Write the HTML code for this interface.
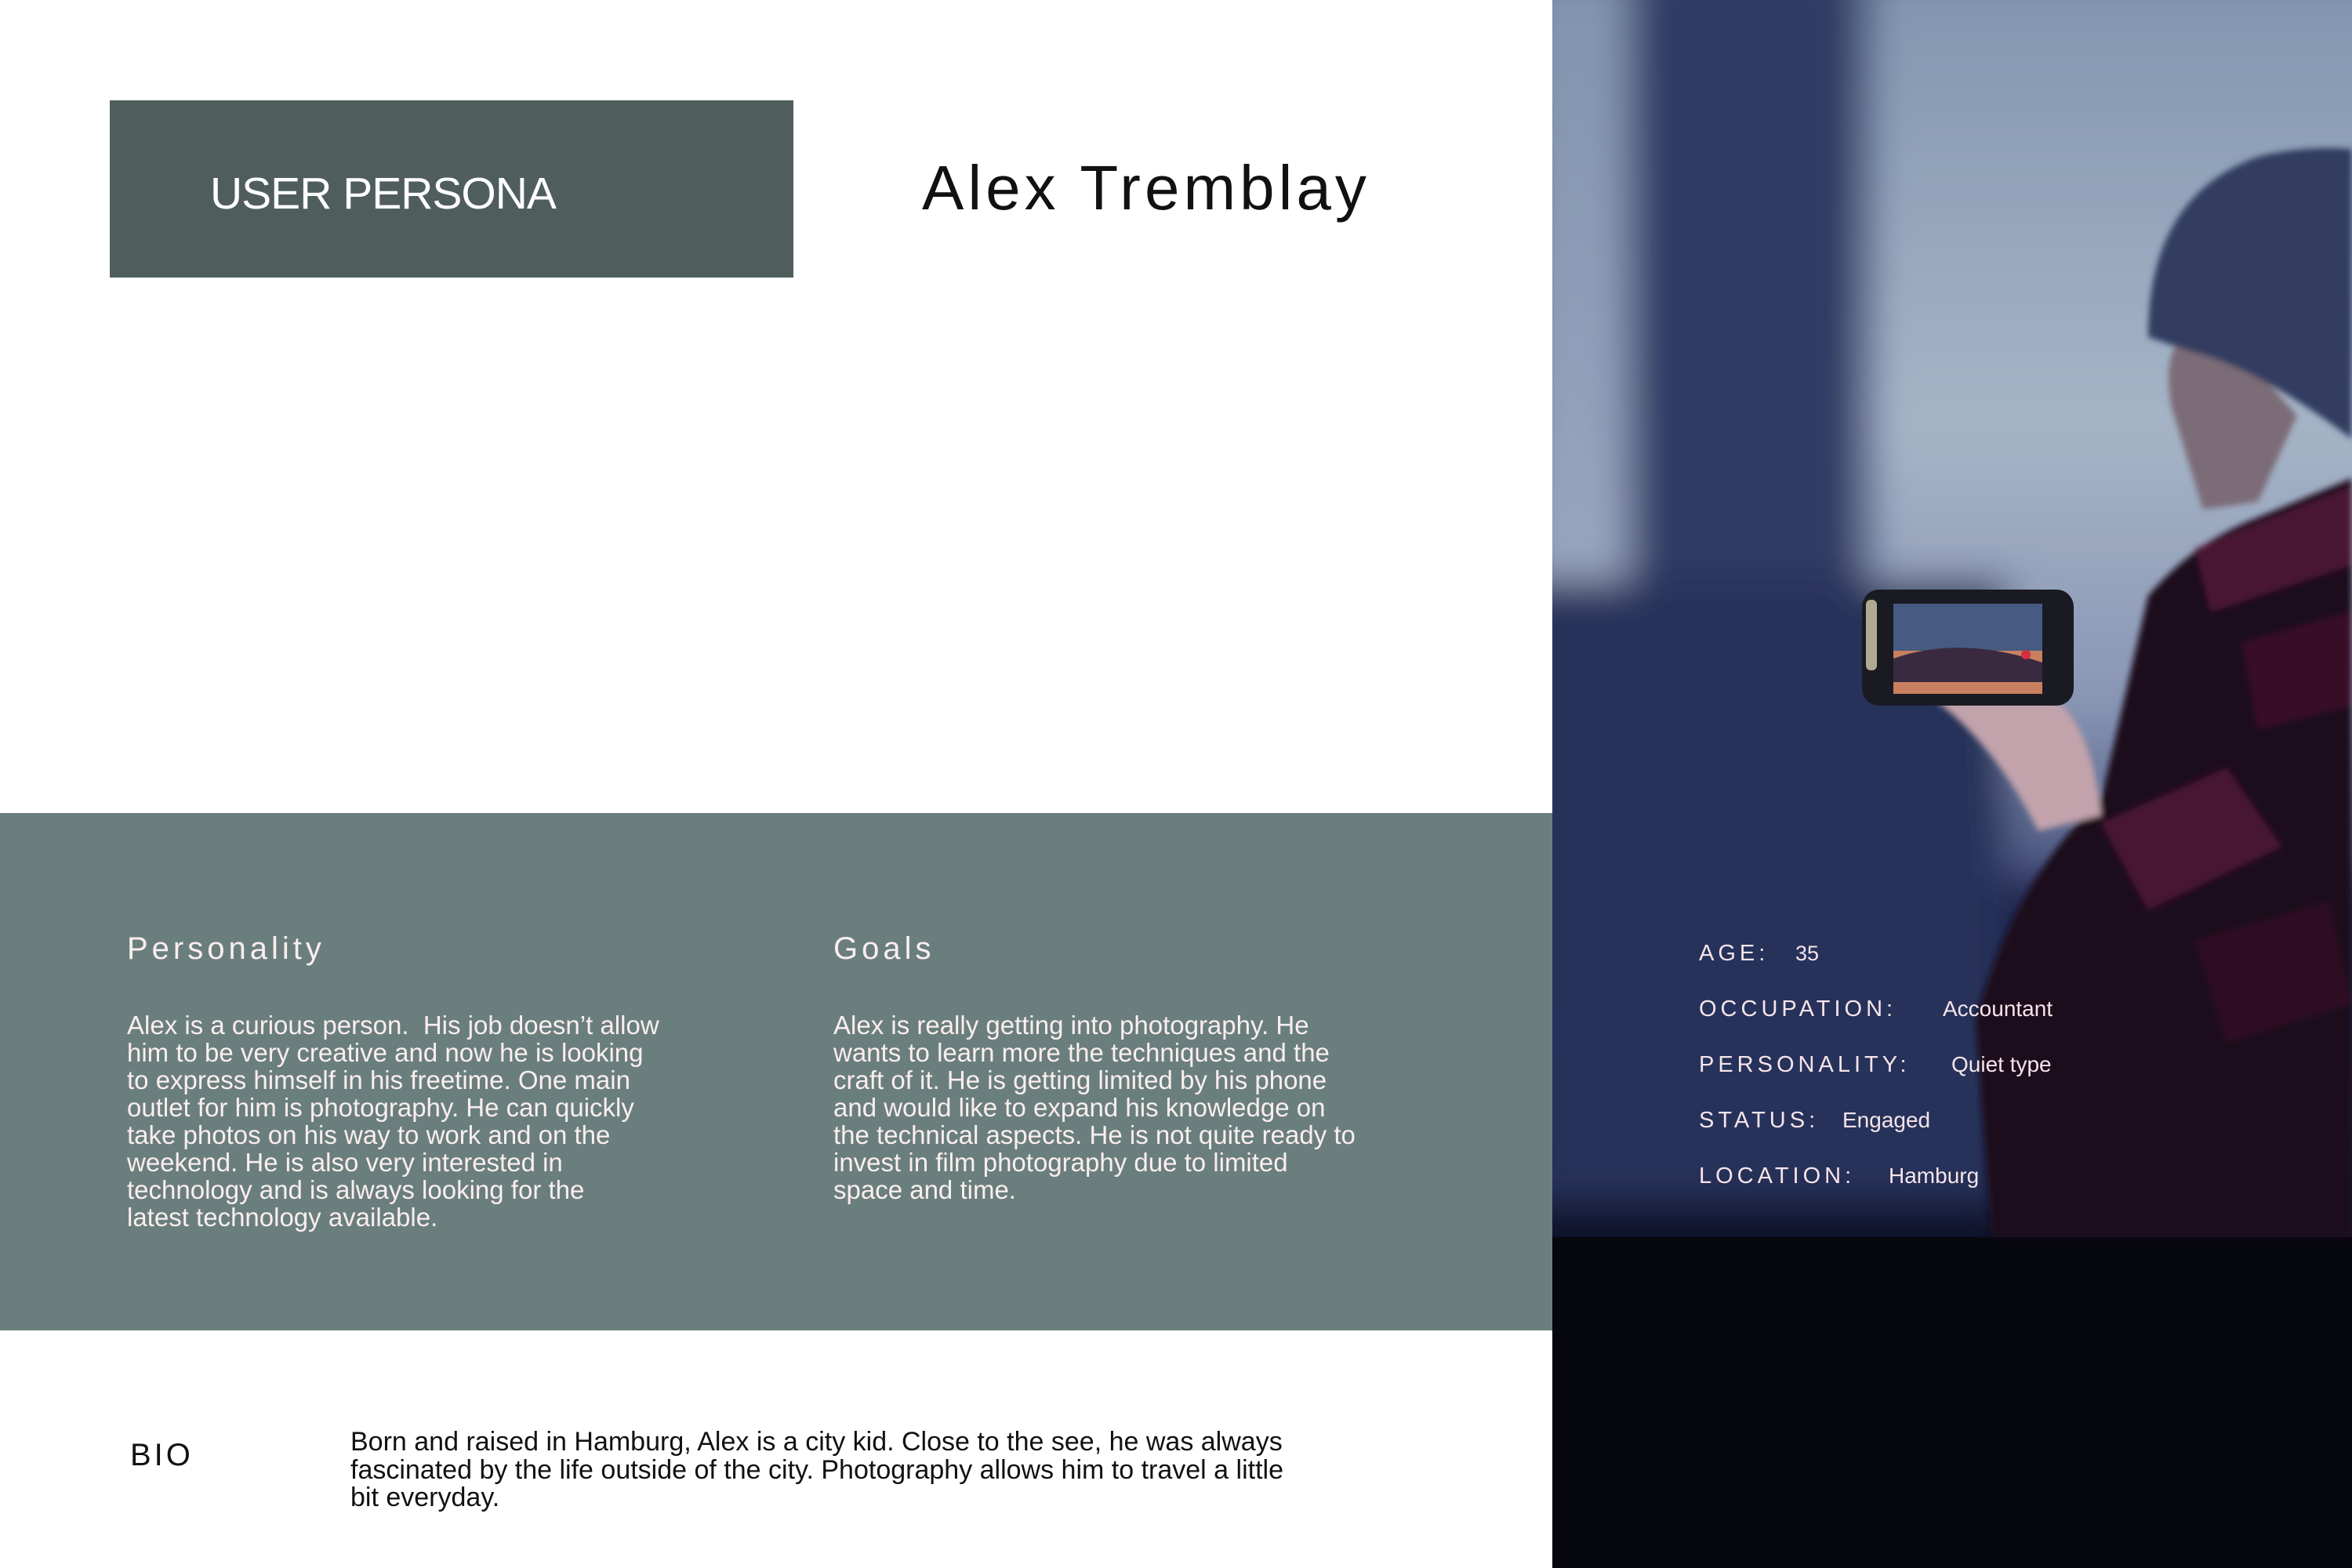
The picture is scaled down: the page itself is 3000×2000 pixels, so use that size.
<!DOCTYPE html>
<html><head><meta charset="utf-8"><style>
*{margin:0;padding:0;box-sizing:border-box}
body{width:3000px;height:2000px;position:relative;background:#fff;font-family:"Liberation Sans",sans-serif;overflow:hidden}
.abs{position:absolute;white-space:nowrap}
.band{position:absolute;left:0;top:1037px;width:1980px;height:660px;background:#6a7f7d}
.box{position:absolute;left:140px;top:128px;width:872px;height:226px;background:#4f5e5d}
.h{color:#fbeeee;font-size:40px;letter-spacing:5px}
.p{color:#fbeeee;font-size:33px;letter-spacing:0px;line-height:35px}
</style></head><body>
<div class="box"></div>
<div class="abs" style="left:268px;top:214px;font-size:57px;color:#fff;letter-spacing:-1px">USER PERSONA</div>
<div class="abs" style="left:1176px;top:194px;font-size:80px;color:#111;letter-spacing:5px">Alex Tremblay</div>
<div class="band"></div>
<div class="abs h" style="left:162px;top:1188px">Personality</div>
<div class="abs h" style="left:1063px;top:1188px">Goals</div>
<div class="abs p" style="left:162px;top:1290px">Alex is a curious person.&nbsp; His job doesn’t allow<br>him to be very creative and now he is looking<br>to express himself in his freetime. One main<br>outlet for him is photography. He can quickly<br>take photos on his way to work and on the<br>weekend. He is also very interested in<br>technology and is always looking for the<br>latest technology available.</div>
<div class="abs p" style="left:1063px;top:1290px">Alex is really getting into photography. He<br>wants to learn more the techniques and the<br>craft of it. He is getting limited by his phone<br>and would like to expand his knowledge on<br>the technical aspects. He is not quite ready to<br>invest in film photography due to limited<br>space and time.</div>
<div class="abs" style="left:166px;top:1834px;font-size:40px;letter-spacing:4px;color:#111">BIO</div>
<div class="abs" style="left:447px;top:1822px;font-size:34px;letter-spacing:0px;line-height:35.5px;color:#111">Born and raised in Hamburg, Alex is a city kid. Close to the see, he was always<br>fascinated by the life outside of the city. Photography allows him to travel a little<br>bit everyday.</div>

<svg style="position:absolute;left:1980px;top:0" width="1020" height="2000" viewBox="0 0 1020 2000">
<defs>
<linearGradient id="bg" x1="0" y1="0" x2="0" y2="1">
<stop offset="0" stop-color="#33416a"/><stop offset="0.4" stop-color="#2a3664"/><stop offset="0.6" stop-color="#1c2248"/><stop offset="0.79" stop-color="#0f1026"/><stop offset="1" stop-color="#07070f"/>
</linearGradient>
<linearGradient id="sky" x1="0" y1="0" x2="0" y2="1">
<stop offset="0" stop-color="#8094ae"/><stop offset="0.5" stop-color="#a6b4c7"/><stop offset="0.8" stop-color="#8a97b5"/><stop offset="1" stop-color="#4a5580"/>
</linearGradient>
<linearGradient id="skyL" x1="0" y1="0" x2="0" y2="1">
<stop offset="0" stop-color="#8193ae"/><stop offset="1" stop-color="#9aa7c0"/>
</linearGradient>
<filter id="b"><feGaussianBlur stdDeviation="25"/></filter>
<filter id="b2"><feGaussianBlur stdDeviation="4"/></filter>
</defs>
<rect width="1020" height="2000" fill="url(#bg)"/>
<g filter="url(#b)">
<rect x="-40" y="-40" width="140" height="820" fill="url(#skyL)"/>
<rect x="400" y="-40" width="700" height="1160" fill="url(#sky)"/>
<rect x="110" y="-40" width="270" height="800" fill="#2e3a64"/>
<rect x="-40" y="740" width="620" height="800" fill="#26305a"/>
</g>
<rect x="0" y="1578" width="1020" height="422" fill="#07070f"/>
<g filter="url(#b2)">
<path d="M560 1578 L540 1300 Q590 1120 700 1020 L760 760 Q820 690 900 660 L1020 610 L1020 1578 Z" fill="#1f0c1c"/>
<path d="M820 700 L1020 620 L1020 720 L840 780 Z" fill="#4a1430"/>
<path d="M700 1050 L860 980 L930 1080 L760 1160 Z" fill="#4e1535" opacity="0.85"/>
<path d="M880 820 L1020 780 L1020 900 L900 930 Z" fill="#3e1028" opacity="0.8"/>
<path d="M820 1200 L990 1150 L1020 1280 L860 1330 Z" fill="#331026" opacity="0.8"/>
<path d="M790 520 Q780 470 795 440 L870 440 L950 530 L900 640 L830 650 Z" fill="#7b6c77"/>
<path d="M760 430 Q760 250 900 200 Q960 185 1020 190 L1020 560 Q900 470 820 450 Z" fill="#323d60"/>
<path d="M470 880 Q560 940 620 1060 L700 1040 Q690 940 650 900 L560 860 Z" fill="#c2a3ac"/>
</g>
<rect x="395" y="752" width="270" height="148" rx="22" fill="#1a1a22"/>
<rect x="400" y="765" width="14" height="90" rx="6" fill="#b0a890"/>
<rect x="435" y="770" width="190" height="115" fill="#465a82"/>
<rect x="435" y="830" width="190" height="55" fill="#c88060"/>
<path d="M435 840 Q520 810 625 845 L625 870 L435 870 Z" fill="#3a2a40"/>
<circle cx="604" cy="835" r="6" fill="#d03040"/>
<text x="187" y="1225" fill="#f6e4ea" font-family="Liberation Sans" font-size="29" letter-spacing="5">AGE:</text>
<text x="310" y="1225" fill="#f6e4ea" font-family="Liberation Sans" font-size="27">35</text>
<text x="187" y="1296" fill="#f6e4ea" font-family="Liberation Sans" font-size="29" letter-spacing="5">OCCUPATION:</text>
<text x="498" y="1296" fill="#f6e4ea" font-family="Liberation Sans" font-size="28">Accountant</text>
<text x="187" y="1367" fill="#f6e4ea" font-family="Liberation Sans" font-size="29" letter-spacing="5">PERSONALITY:</text>
<text x="509" y="1367" fill="#f6e4ea" font-family="Liberation Sans" font-size="28">Quiet type</text>
<text x="187" y="1438" fill="#f6e4ea" font-family="Liberation Sans" font-size="29" letter-spacing="5">STATUS:</text>
<text x="370" y="1438" fill="#f6e4ea" font-family="Liberation Sans" font-size="28">Engaged</text>
<text x="187" y="1509" fill="#f6e4ea" font-family="Liberation Sans" font-size="29" letter-spacing="5">LOCATION:</text>
<text x="429" y="1509" fill="#f6e4ea" font-family="Liberation Sans" font-size="28">Hamburg</text>
</svg>
</body></html>
